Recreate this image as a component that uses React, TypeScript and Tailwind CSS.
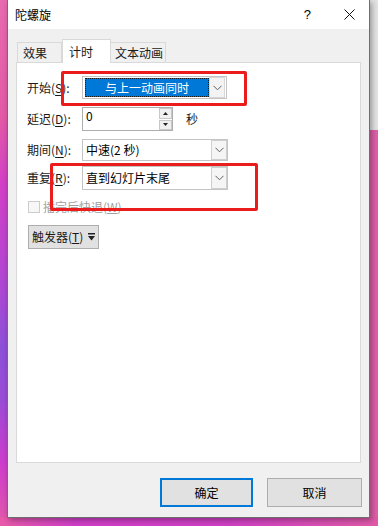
import React from "react";

const font = { fontFamily: '"Noto Sans CJK SC", "Microsoft YaHei", sans-serif' };

function Chevron() {
  return (
    <svg width="9" height="6" viewBox="0 0 9 6">
      <path d="M0.5 0.8 L4.5 4.8 L8.5 0.8" fill="none" stroke="#606060" strokeWidth="1" />
    </svg>
  );
}

function DropBtn() {
  return (
    <div className="w-[16px] h-full border border-[#cfcfcf] bg-[#f5f5f5] flex items-center justify-center">
      <Chevron />
    </div>
  );
}

function Label({ pre, k }: { pre: string; k: string }) {
  return (
    <div className="w-[55px] text-[12px] text-[#1a1a1a] leading-none">
      {pre}(<span className="underline underline-offset-2">{k}</span>):
    </div>
  );
}

export default function App() {
  return (
    <div
      className="relative w-[378px] h-[526px] overflow-hidden pl-[7px] bg-[linear-gradient(180deg,#e86ab0_0%,#e35aa6_22%,#d240c6_35%,#b446d2_52%,#8e50d8_66%,#9a4cd6_76%,#cd3ccc_88%,#e25aa8_100%)]"
      style={font}
    >
      <div className="absolute top-0 right-0 w-[8px] h-[130px] bg-[#e4e4e4]" />
      <div className="absolute top-[130px] right-0 w-[8px] bottom-0 bg-[#e060aa]" />
      <div className="absolute bottom-0 left-0 right-0 h-[9px] bg-[linear-gradient(90deg,#e85aa8_0%,#d03ec8_20%,#cf40c4_60%,#e05aa8_100%)]" />

      <div className="relative w-[363px] h-[518px] border border-t-0 border-[#6e6e6e] flex flex-col shadow-[2px_2px_6px_rgba(0,0,0,0.35)]">
        {/* title bar */}
        <div className="h-[29px] bg-white flex items-center pl-[7px] pr-[14px]">
          <div className="text-[12px] text-black leading-none flex-1">陀螺旋</div>
          <div className="text-[13px] text-black leading-none mr-[33px]" style={{ fontFamily: '"Liberation Sans", sans-serif' }}>?</div>
          <svg width="11" height="11" viewBox="0 0 11 11">
            <path d="M0.5 0.5 L10.5 10.5 M10.5 0.5 L0.5 10.5" stroke="#111" strokeWidth="1" />
          </svg>
        </div>

        {/* body */}
        <div className="flex-1 bg-[#f0f0f0] flex flex-col">
          {/* tabs */}
          <div className="flex items-end h-[33px] pl-[9px]">
            <div className="w-[45px] h-[20px] border border-b-0 border-[#d9d9d9] bg-[#f0f0f0] text-[12px] leading-none flex items-center pl-[5px] text-[#1a1a1a]">效果</div>
            <div className="relative z-10 w-[49px] h-[24px] -mb-[1px] border border-b-0 border-[#d9d9d9] bg-white text-[12px] leading-none flex items-start pt-[6px] pl-[6px] text-[#1a1a1a]">计时</div>
            <div className="w-[55px] h-[20px] border border-b-0 border-l-0 border-[#d9d9d9] bg-[#f0f0f0] text-[12px] leading-none flex items-center pl-[4px] text-[#1a1a1a]">文本动画</div>
          </div>

          {/* panel */}
          <div className="mx-[8px] h-[401px] bg-white border border-[#d9d9d9] flex flex-col pl-[10px]">
            {/* row1 */}
            <div className="mt-[13px] flex items-center h-[23px]">
              <Label pre="开始" k="S" />
              <div className="w-[145px] h-[23px] border border-[#c4c4c4] bg-white flex items-center pl-[2px] pr-[1px] py-[1px]">
                <div className="flex-1 h-[19px] bg-[#0078d7] border border-dotted border-[#1a1a1a] text-white text-[12px] leading-none flex items-center justify-center">与上一动画同时</div>
                <div className="w-[16px] h-[21px] ml-[0px] border border-[#d6d6d6] bg-[#f3f3f3] flex items-center justify-center">
                  <Chevron />
                </div>
              </div>
            </div>
            {/* row2 */}
            <div className="mt-[8px] flex items-center h-[24px]">
              <Label pre="延迟" k="D" />
              <div className="w-[91px] h-[24px] border border-[#adadad] bg-white flex">
                <div className="flex-1 text-[12px] leading-none pl-[3px] pt-[2px] text-black">0</div>
                <div className="w-[13px] flex flex-col gap-[1px] pr-[0px]">
                  <div className="flex-1 border border-[#c8c8c8] bg-[#f0f0f0] flex items-center justify-center">
                    <svg width="5" height="3" viewBox="0 0 5 3"><path d="M0 3 L2.5 0 L5 3 Z" fill="#222" /></svg>
                  </div>
                  <div className="flex-1 border border-[#c8c8c8] bg-[#f0f0f0] flex items-center justify-center">
                    <svg width="5" height="3" viewBox="0 0 5 3"><path d="M0 0 L2.5 3 L5 0 Z" fill="#222" /></svg>
                  </div>
                </div>
              </div>
              <div className="ml-[13px] text-[12px] leading-none text-[#1a1a1a]">秒</div>
            </div>
            {/* row3 */}
            <div className="mt-[8px] flex items-center h-[22px]">
              <Label pre="期间" k="N" />
              <div className="w-[146px] h-[22px] border border-[#c4c4c4] bg-white flex items-center">
                <div className="flex-1 text-[12px] leading-none pl-[3px] text-black">中速(2 秒)</div>
                <DropBtn />
              </div>
            </div>
            {/* row4 */}
            <div className="mt-[5px] flex items-center h-[24px]">
              <Label pre="重复" k="R" />
              <div className="w-[146px] h-[24px] border border-[#c4c4c4] bg-white flex items-center">
                <div className="flex-1 text-[12px] leading-none pl-[3px] text-black">直到幻灯片末尾</div>
                <DropBtn />
              </div>
            </div>
            {/* checkbox */}
            <div className="mt-[11px] flex items-center h-[12px] ml-[1px]">
              <div className="w-[12px] h-[12px] border border-[#cccccc] bg-[#f7f7f7]" />
              <div className="ml-[3px] text-[12px] leading-none text-[#a0a0a0]">
                播完后快退(<span className="underline">W</span>)
              </div>
            </div>
            {/* trigger */}
            <div className="mt-[12px] w-[71px] h-[24px] ml-[1px] border border-[#adadad] bg-[#e1e1e1] flex items-center pl-[3px]">
              <div className="text-[12px] leading-none text-[#1a1a1a]">
                触发器(<span className="underline">T</span>)
              </div>
              <svg className="ml-[5px]" width="7" height="8" viewBox="0 0 7 8">
                <rect x="0" y="0" width="7" height="1.5" fill="#222" />
                <path d="M0 3 L7 3 L3.5 7.5 Z" fill="#222" />
              </svg>
            </div>
          </div>

          {/* footer */}
          <div className="flex justify-end gap-[14px] pr-[7px] mt-[15px]">
            <div className="w-[93px] h-[29px] border-2 border-[#0078d7] bg-[#e1e1e1] flex items-center justify-center text-[12px] leading-none text-black">确定</div>
            <div className="w-[95px] h-[29px] border border-[#adadad] bg-[#e1e1e1] flex items-center justify-center text-[12px] leading-none text-black">取消</div>
          </div>
        </div>
      </div>

      {/* annotations */}
      <div className="absolute left-[61px] top-[71px] w-[186px] h-[35px] border-[3px] border-[#ea1c1c] rounded-[2px]" />
      <div className="absolute left-[50px] top-[163px] w-[208px] h-[48px] border-[3px] border-[#ea1c1c] rounded-[2px]" />
    </div>
  );
}
